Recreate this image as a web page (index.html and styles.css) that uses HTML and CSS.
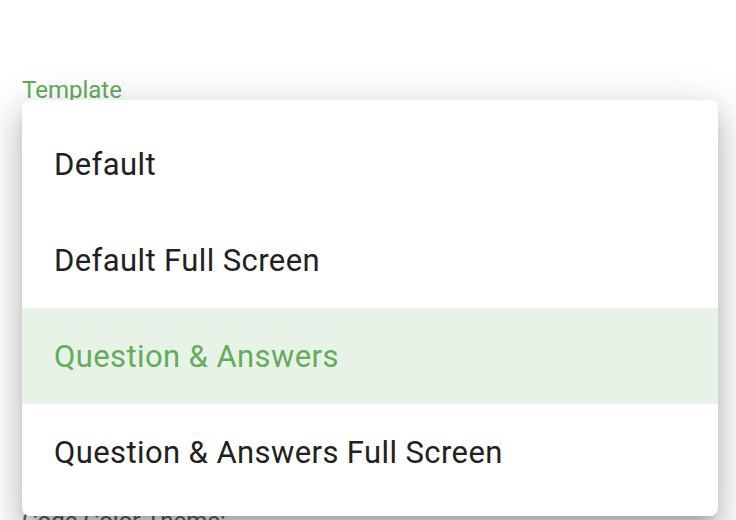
FILE: index.html
```html
<!DOCTYPE html>
<html>
<head>
<meta charset="utf-8">
<link rel="stylesheet" href="styles.css">
</head>
<body>
<div class="page">
  <div class="field">
    <label class="field-label">Template</label>
    <div class="field-input">Question &amp; Answers</div>
  </div>
  <div class="field">
    <div class="section-label">Code Color Theme:</div>
  </div>
  <ul class="menu">
    <li class="menu-item">Default</li>
    <li class="menu-item">Default Full Screen</li>
    <li class="menu-item selected">Question &amp; Answers</li>
    <li class="menu-item">Question &amp; Answers Full Screen</li>
  </ul>
</div>
</body>
</html>
```
FILE: styles.css
```css
html, body {
  margin: 0;
  padding: 0;
  background: #fff;
  font-family: Roboto, "Liberation Sans", sans-serif;
}
.page {
  position: relative;
  padding: 76px 22px 0 22px;
  height: 520px;
  box-sizing: border-box;
  overflow: hidden;
}
.field-label {
  display: block;
  color: #62ac5b;
  font-size: 24px;
  line-height: 28px;
}
.field-input {
  height: 60px;
  font-size: 28px;
  color: #212121;
  border-bottom: 1px solid #bbb;
}
.section-label {
  margin-top: 342px;
  font-size: 24px;
  line-height: 28px;
  color: #5f5f5f;
}
.menu {
  position: absolute;
  top: 100px;
  left: 22px;
  width: 696px;
  margin: 0;
  padding: 16px 0;
  list-style: none;
  background: #fff;
  border-radius: 8px;
  box-shadow: 0 10px 13px -6px rgba(0,0,0,0.2), 0 20px 31px 3px rgba(0,0,0,0.14), 0 8px 38px 7px rgba(0,0,0,0.12);
}
.menu-item {
  height: 96px;
  display: flex;
  align-items: center;
  padding-left: 32px;
  font-size: 31px;
  color: #212121;
  letter-spacing: 0.4px;
}
.menu-item.selected {
  background: #e8f3e8;
  color: #62ac5b;
}
```
